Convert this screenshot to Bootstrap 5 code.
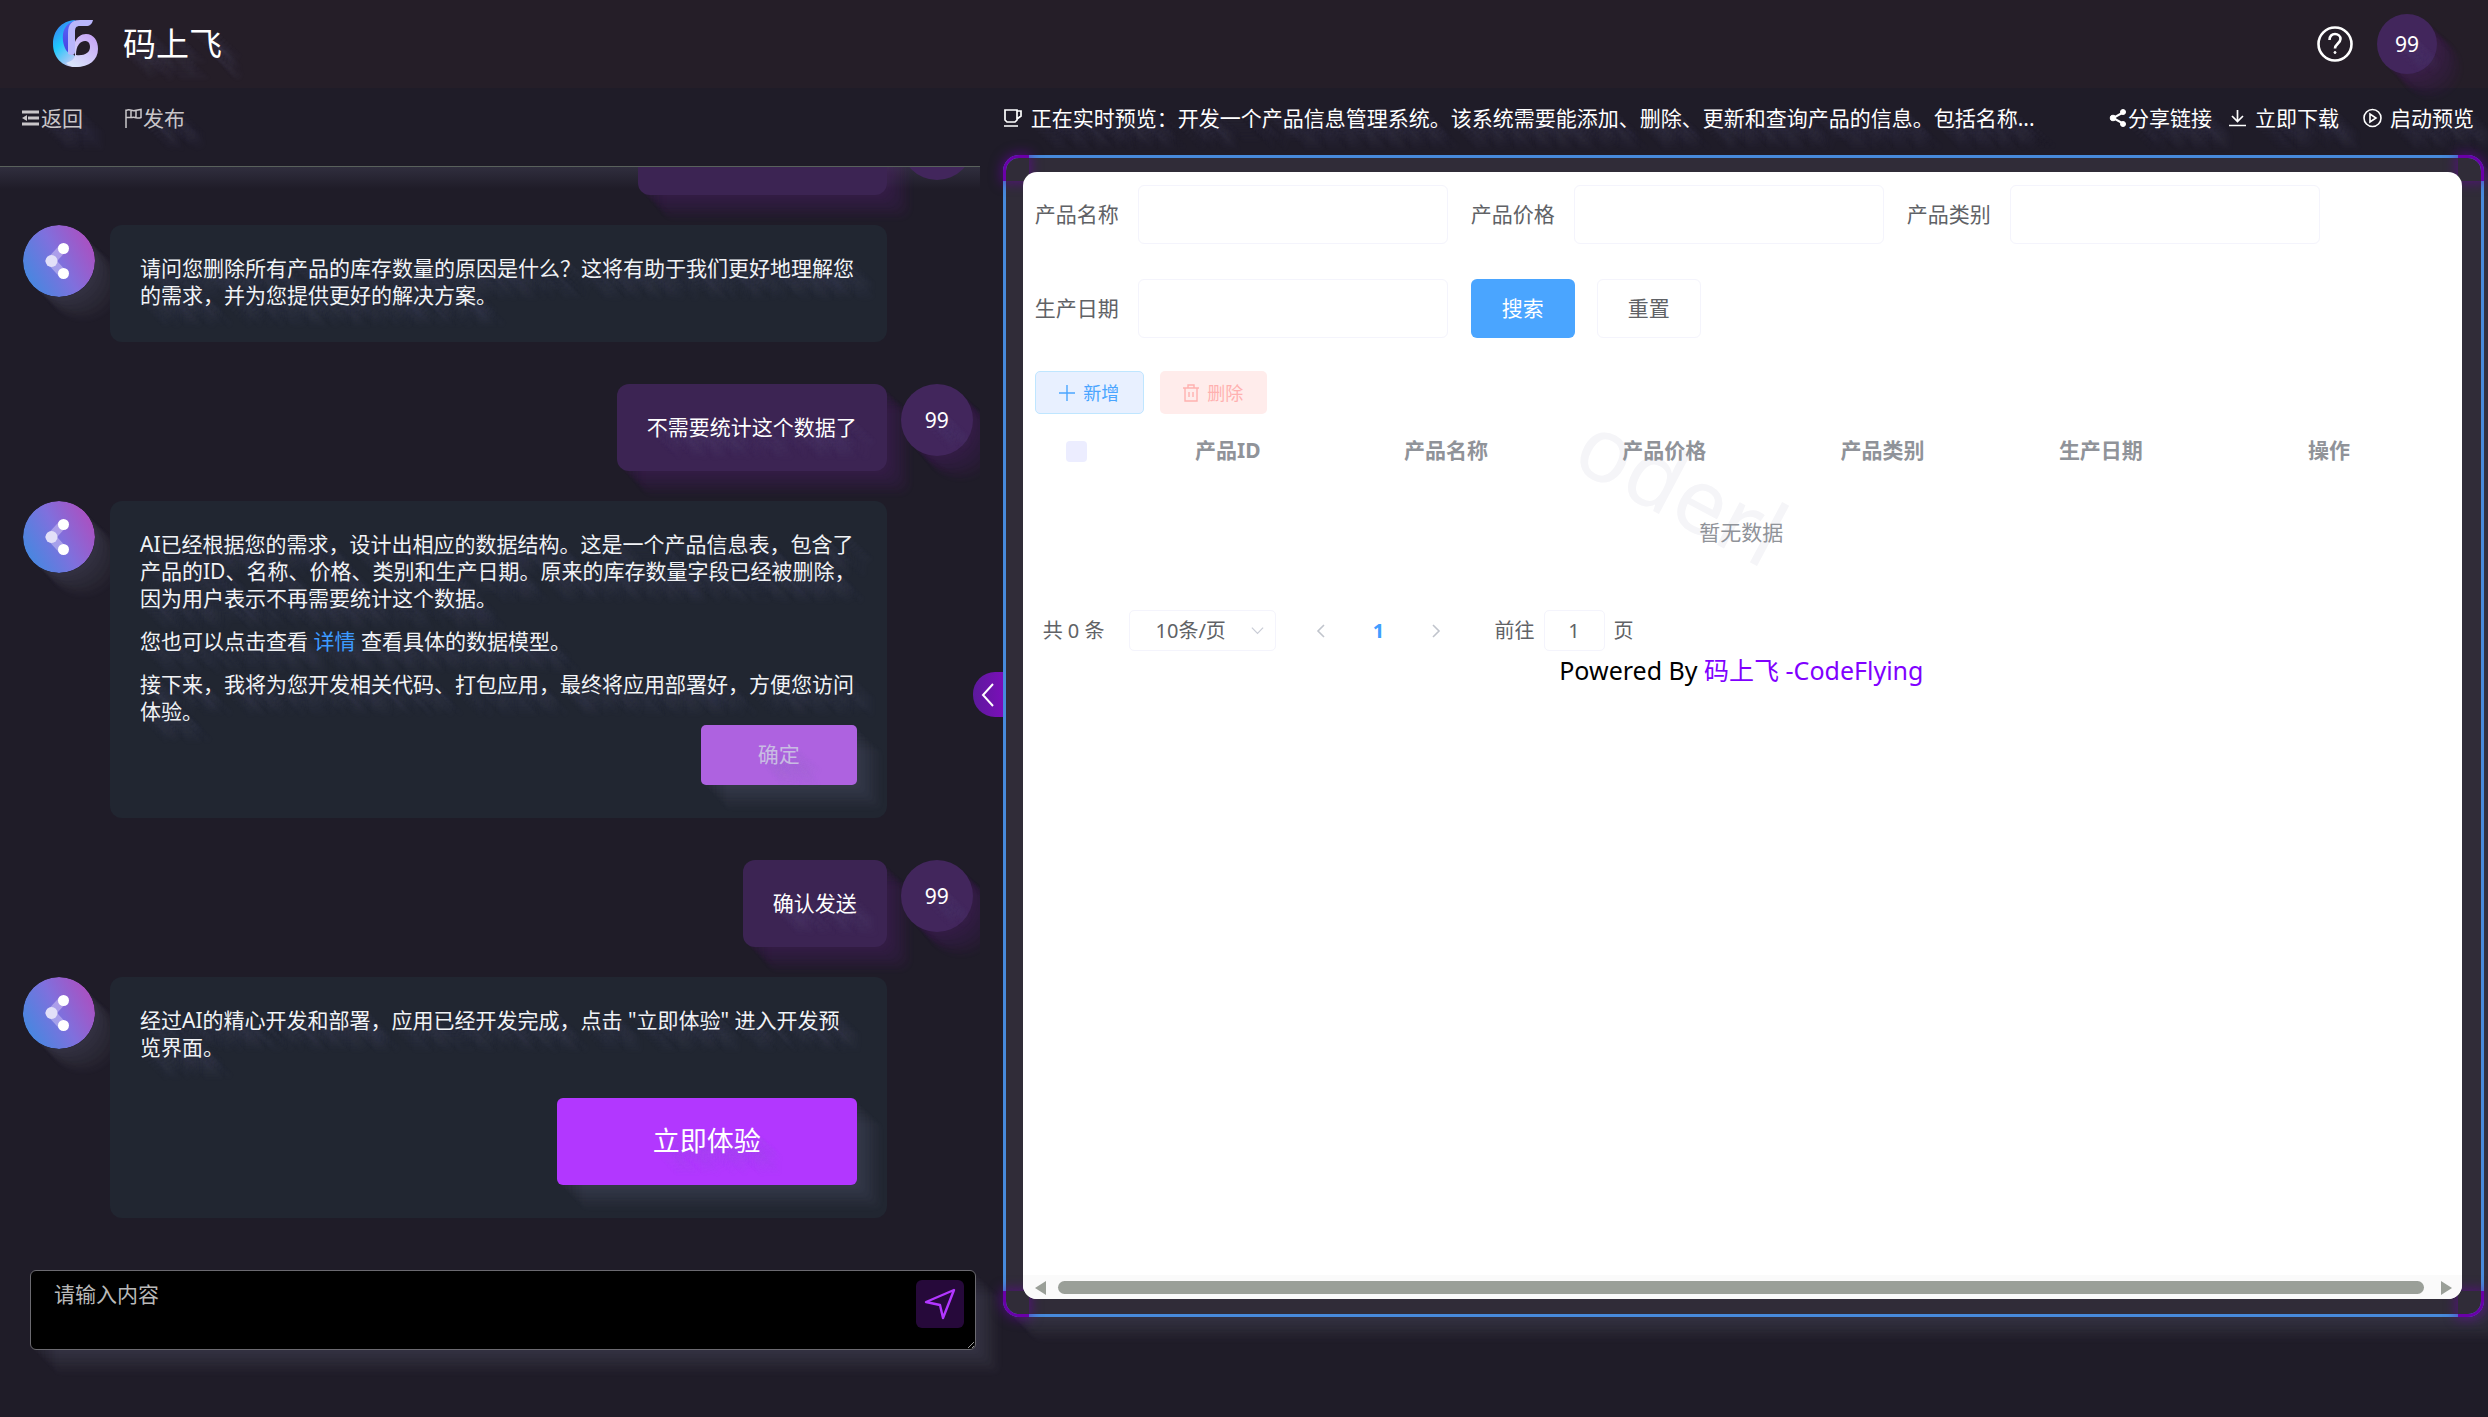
<!DOCTYPE html>
<html lang="zh-CN">
<head>
<meta charset="utf-8">
<meta name="viewport" content="width=device-width, initial-scale=1">
<title>码上飞</title>
<link href="https://cdn.jsdelivr.net/npm/bootstrap@5.3.0/dist/css/bootstrap.min.css" rel="stylesheet">
<style>
:root{
  --trail:rgba(130,135,180,.06);
  --trail-text:3px 3px 2px var(--trail),6px 6px 2px var(--trail),9px 9px 3px var(--trail),12px 12px 3px var(--trail),15px 15px 4px var(--trail),18px 18px 4px var(--trail),21px 21px 4px var(--trail);
  --glow:rgba(150,150,190,.03);
}
body{font-family:"Noto Sans","Noto Sans CJK SC",sans-serif;font-size:21px;line-height:27px;background:#1f1c28;color:#fff}
button,input,select,textarea{font-family:inherit}
.trail{text-shadow:var(--trail-text)}
.trail-box{box-shadow:4px 4px 2px var(--glow),8px 8px 2px var(--glow),12px 12px 3px var(--glow),16px 16px 3px var(--glow),20px 20px 4px var(--glow),24px 24px 4px var(--glow)}
.violet{--glow:rgba(110,40,140,.06)}
.topbar{flex:none;height:88px;background:#251e28;padding:0 51px 0 53px}
.topbar .brand{font-size:33px;line-height:44px}
.user-dot{flex:none;border-radius:50%;background:#42265c;font-size:21px}
.dot-sm{width:60px;height:60px}
.dot-lg{width:72px;height:72px}
.plain{background:none;border:0;padding:0;color:inherit;line-height:27px}
.side{flex:0 0 40.3%;min-width:0}
.side-tools{flex:none;height:60px;padding:0 22px;gap:42px;color:#c9c6c9;margin-bottom:18px}
.chat{border-top:1px solid #59615c;margin-right:23px;padding:0 7px 36px 23px;min-height:0;background:linear-gradient(#302e3e,#1f1c28 22px)}
.bot{gap:15px;margin-bottom:42px}
.bot:last-child{margin-bottom:0}
.mine{gap:14px;margin-bottom:30px}
.bubble{border-radius:12px;padding:30px 30px 33px}
.bot .bubble{flex:1;min-width:0;margin-right:86px;background:#212631;color:#f1f3f6}
.bot .avatar{flex:none;width:72px;height:72px;border-radius:50%}
.mine .bubble{background:#3c2453;padding-bottom:30px;padding-left:30px}
.mine .bubble.past{width:249px;height:87px}
.bubble p{margin-bottom:16px}
.bubble p.last{margin-bottom:0}
.bubble p a{color:#3d9bff;text-decoration:none}
.btn-ok{width:156px;height:60px;border:0;border-radius:5px;background:#ae62e0;color:#cbb6e6;font-size:21px}
.btn-ok:disabled{background:#ae62e0;color:#c8bce2;opacity:1}
.btn-go{width:300px;height:87px;margin-top:37px;border:0;border-radius:6px;background:#b237ff;color:#fff;font-size:27px}
.btn-go:hover{background:#a32bf0;color:#fff}
.btn-ok,.btn-go{--trail:rgba(225,130,255,.14)}
.composer{flex:none;margin:0 27px 67px 30px}
.composer textarea{display:block;height:80px;background:#000;border:1px solid #6b6a70;border-radius:6px;color:#eee;font-size:21px;line-height:27px;padding:10px 70px 10px 23px}
.composer textarea:focus{background:#000;color:#eee}
.composer textarea::placeholder{color:#b9b9b9}
.send{position:absolute;right:12px;top:10px;width:48px;height:48px;border:0;border-radius:6px;background:#26093a}
.stage{min-width:0}
.stage-tools{flex:none;height:60px;margin-bottom:7px;padding-right:14px}
.stage-tools a{color:#fff;text-decoration:none}
.frame{margin:0 4px 100px 0;border:3px solid #478adb;border-radius:16px;padding:14px 19px 15px 17px;background:#302c38;min-height:0;--glow:rgba(150,150,190,.03)}
.corner{position:absolute;width:26px;height:26px;border:0 solid #6a00a8;box-shadow:0 0 12px 2px rgba(106,0,168,.55)}
.c-tl{left:-3px;top:-3px;border-width:3px 0 0 3px;border-top-left-radius:16px}
.c-tr{right:-3px;top:-3px;border-width:3px 3px 0 0;border-top-right-radius:16px}
.c-bl{left:-3px;bottom:-3px;border-width:0 0 3px 3px;border-bottom-left-radius:16px}
.c-br{right:-3px;bottom:-3px;border-width:0 3px 3px 0;border-bottom-right-radius:16px}
.fold{position:absolute;left:-33px;top:514px;width:30px;height:45px;border:0;padding:0;border-radius:22px 0 0 22px;background:linear-gradient(90deg,#5c1a9c,#7a0fb8)}
.panel{position:relative;background:#fff;border-radius:14px;color:#606266}
.panel-body{padding:13px 14px 0 12px;min-height:0}
.filters{row-gap:35px;column-gap:23px}
.field label{width:103px}
.field input{width:310px;height:59px;border:1px solid #f4f4fc;border-radius:6px;font-size:21px}
.btn-act{width:104px;height:59px;border-radius:6px;font-size:21px;line-height:27px}
.btn-find{background:#4aa5ff;color:#fff;border:0}
.btn-reset{background:#fff;border:1px solid #f4f4fc;color:#606266;margin-left:22px}
.actions{margin-top:33px}
.btn-mini{height:43px;border-radius:5px;font-size:18px;line-height:24px;padding:0 23px}
.btn-add{background:#e8f0ff;border:1px solid #bfe6ff;color:#4aa5ff;width:109px}
.btn-del{background:#ffeceb;border:0;color:#ffb1b0;width:107px}
.grid-table{table-layout:fixed;color:#909399;--bs-table-bg:transparent;--bs-table-color:#909399}
.grid-table th{height:72px;padding:0;text-align:center;vertical-align:middle;border:0;font-weight:700}
.grid-table td{height:92px;padding:0;text-align:center;vertical-align:middle;border:0;color:#909399}
.grid-table .form-check-input{width:21px;height:21px;margin:0;border:0;background-color:#ecedff;border-radius:4px;vertical-align:middle}
.ghost{position:absolute;left:562px;top:218px;font-size:90px;line-height:90px;color:#f5f5f8;transform:rotate(28deg);transform-origin:0 50%;white-space:nowrap;pointer-events:none}
.pager{font-size:20px;padding-left:8px;margin-top:32px}
.pager select{width:147px;height:41px;margin-left:24px;border:1px solid #f4f4fc;border-radius:5px;font-size:20px;line-height:26px;color:#606266;padding:0 36px 0 26px;--bs-form-select-bg-img:url("data:image/svg+xml,%3csvg xmlns='http://www.w3.org/2000/svg' viewBox='0 0 16 16'%3e%3cpath fill='none' stroke='%23c9ccd6' stroke-width='1.3' d='m2 5 6 6 6-6'/%3e%3c/svg%3e");background-position:right 10px center;background-size:15px}
.pager button{width:58px;color:#c0c4cc}
.pager .now{color:#409eff;font-weight:700}
.pager label{margin-left:29px}
.pager input{width:61px;height:41px;margin:0 9px;border:1px solid #f4f4fc;border-radius:5px;font-size:20px;padding:0;text-align:center;color:#606266}
.powered{color:#000;font-size:25px;line-height:34px;margin-top:2px}
.powered a{color:#8000ff;text-decoration:none}
.hscroll{height:24px;padding:1px 10px 0 12px;gap:12px;background:#fafafa;border-radius:0 0 14px 14px}
.hscroll i{flex:1;height:13px;margin-right:5px;border-radius:7px;background:#9a9f98}
svg{flex:none;display:block}
</style>
</head>
<body>
<svg width="0" height="0" class="position-absolute" aria-hidden="true">
  <defs>
    <linearGradient id="av" x1="0" y1=".75" x2="1" y2=".2"><stop offset="0" stop-color="#4289e0"/><stop offset=".5" stop-color="#7f70dd"/><stop offset="1" stop-color="#b04cbd"/></linearGradient>
    <symbol id="bot" viewBox="0 0 72 72">
      <circle cx="36" cy="36" r="36" fill="url(#av)"/>
      <path d="M40 23 28 36l12 13" fill="none" stroke="#e2d8fa" stroke-opacity=".45" stroke-width="9"/>
      <circle cx="28.500" cy="36" r="6" fill="#e2e0f8"/><circle cx="40.500" cy="23.500" r="5.500" fill="#fff"/><circle cx="40.500" cy="48.500" r="5.500" fill="#fff"/>
    </symbol>
  </defs>
</svg>
<div class="d-flex flex-column vh-100">
  <header class="topbar d-flex align-items-center">
    <svg width="46" height="48" viewBox="0 0 46 48" aria-hidden="true">
      <defs>
        <linearGradient id="l1" x1="0" y1="0" x2=".7" y2="1"><stop offset="0" stop-color="#3f6cf0"/><stop offset=".45" stop-color="#1fc8fb"/><stop offset="1" stop-color="#f0c8f4"/></linearGradient>
        <linearGradient id="l2" x1="1" y1="0" x2=".3" y2="1"><stop offset="0" stop-color="#c49cf5"/><stop offset="1" stop-color="#d9e4fb"/></linearGradient>
        <linearGradient id="l3" x1="0" y1="0" x2="0" y2="1"><stop offset="0" stop-color="#5a66fa"/><stop offset="1" stop-color="#4440e0"/></linearGradient>
      </defs>
      <path d="M22 0C8 1 0 11 0 24c0 13 9 23 22 23 5 0 9-2 12-4L19 34V8z" fill="url(#l1)"/>
      <path d="M21 1c-9 3-12 10-11 20 1 7 4 12 9 14V10c0-4 2-8 6-10z" fill="url(#l3)"/>
      <path d="M22 36V22c2-5 6-8 11-8 8 0 12 7 12 15 0 11-9 18-22 18-5 0-8-2-10-4 6-2 8-4 9-7zm10-15c-5 0-9 5-9 14 8 1 14-2 14-8 0-4-2-6-5-6z" fill="url(#l2)" fill-rule="evenodd"/>
      <path d="M15 34V13C15 4 19 0 27 0h13c-1 4-3 6-7 6h-6c-4 0-5 2-5 6v20c0 3-3 4-7 2z" fill="#b9b6fb"/>
    </svg>
    <span class="brand trail ms-4">码上飞</span>
    <button class="plain ms-auto me-4" type="button" aria-label="帮助">
      <svg width="36" height="36" viewBox="0 0 36 36" fill="none" stroke="#fff"><circle cx="18" cy="18" r="16.500" stroke-width="2.600"/><path d="M12.500 14c0-4 2.500-6 5.500-6s5.500 2 5.500 5c0 4-5.500 5-5.500 9.500" stroke-width="2.600"/><circle cx="18" cy="26.500" r="1" fill="#fff"/></svg>
    </button>
    <span class="user-dot dot-sm d-flex align-items-center justify-content-center trail trail-box violet">99</span>
  </header>

  <main class="d-flex flex-fill" style="min-height:0">
    <section class="side d-flex flex-column">
      <nav class="side-tools d-flex align-items-center">
        <button class="plain trail d-flex align-items-center" type="button">
          <svg width="19" height="18" viewBox="0 0 19 18" stroke="currentColor" stroke-width="3" fill="none"><path d="M0 3h17M6 9h11M0 15h17"/><path d="M0 9 5 6v6z" fill="currentColor" stroke="none"/></svg>返回</button>
        <button class="plain trail d-flex align-items-center" type="button">
          <svg width="18" height="20" viewBox="0 0 18 20" stroke="currentColor" stroke-width="1.500" fill="none"><path d="M1 20V1.500M1 2.500c4-2 6 1 9 0l6-1v8c-4 2-5-1-9 0H1M6 2v7M11 3v7"/></svg>发布</button>
      </nav>

      <div class="chat flex-fill d-flex flex-column justify-content-end overflow-hidden">
        <div class="mine d-flex align-items-start justify-content-end">
          <div class="bubble past trail-box violet"></div>
          <span class="user-dot dot-lg"></span>
        </div>
        <div class="bot d-flex align-items-start">
          <svg class="avatar trail-box" aria-hidden="true"><use href="#bot"/></svg>
          <div class="bubble trail"><p class="last">请问您删除所有产品的库存数量的原因是什么？这将有助于我们更好地理解您的需求，并为您提供更好的解决方案。</p></div>
        </div>
        <div class="mine d-flex align-items-start justify-content-end">
          <div class="bubble trail trail-box violet">不需要统计这个数据了</div>
          <span class="user-dot dot-lg d-flex align-items-center justify-content-center trail trail-box violet">99</span>
        </div>
        <div class="bot d-flex align-items-start">
          <svg class="avatar trail-box" aria-hidden="true"><use href="#bot"/></svg>
          <div class="bubble trail">
            <p>AI已经根据您的需求，设计出相应的数据结构。这是一个产品信息表，包含了产品的ID、名称、价格、类别和生产日期。原来的库存数量字段已经被删除，因为用户表示不再需要统计这个数据。</p>
            <p>您也可以点击查看 <a href="#">详情</a> 查看具体的数据模型。</p>
            <p class="last">接下来，我将为您开发相关代码、打包应用，最终将应用部署好，方便您访问体验。</p>
            <div class="d-flex justify-content-end"><button class="btn btn-ok trail trail-box" type="button" disabled>确定</button></div>
          </div>
        </div>
        <div class="mine d-flex align-items-start justify-content-end">
          <div class="bubble trail trail-box violet">确认发送</div>
          <span class="user-dot dot-lg d-flex align-items-center justify-content-center trail trail-box violet">99</span>
        </div>
        <div class="bot d-flex align-items-start">
          <svg class="avatar trail-box" aria-hidden="true"><use href="#bot"/></svg>
          <div class="bubble trail">
            <p class="last">经过AI的精心开发和部署，应用已经开发完成，点击 "立即体验" 进入开发预览界面。</p>
            <div class="d-flex justify-content-end"><button class="btn btn-go trail trail-box" type="button">立即体验</button></div>
          </div>
        </div>
      </div>

      <form class="composer position-relative mt-3">
        <textarea class="form-control trail-box" placeholder="请输入内容" aria-label="请输入内容"></textarea>
        <button class="send d-flex align-items-center justify-content-center" type="button" aria-label="发送">
          <svg width="32" height="32" viewBox="0 0 32 32" fill="none" stroke="#b237ff" stroke-width="2.400" stroke-linejoin="round"><path d="M30 2 2 14l14 3 3 13z"/></svg>
        </button>
      </form>
    </section>

    <section class="stage flex-fill d-flex flex-column">
      <div class="stage-tools d-flex align-items-center trail">
        <svg class="me-2" width="20" height="20" viewBox="0 0 20 20" fill="none" stroke="#fff" stroke-width="1.700"><path d="M2 2h12v10l-2 2H4l-2-2zM14 3h4v5l-4 3M1 18h14"/></svg>
        <span>正在实时预览：开发一个产品信息管理系统。该系统需要能添加、删除、更新和查询产品的信息。包括名称...</span>
        <nav class="ms-auto d-flex align-items-center flex-shrink-0">
          <a href="#" class="d-flex align-items-center"><svg width="19" height="20" viewBox="0 0 19 20" fill="#fff" stroke="#fff"><path d="M15 4 4 10l11 6" fill="none" stroke-width="2"/><circle cx="14" cy="4" r="2.500"/><circle cx="4" cy="10" r="2.800"/><circle cx="14" cy="16" r="2.500"/></svg>分享链接</a>
          <a href="#" class="d-flex align-items-center ms-3"><svg class="me-2" width="19" height="20" viewBox="0 0 19 20" fill="none" stroke="#fff" stroke-width="1.700"><path d="M9.500 2v11M4 8l5.500 5.500L15 8M1 17.500h17"/></svg>立即下载</a>
          <a href="#" class="d-flex align-items-center ms-4"><svg class="me-2" width="19" height="20" viewBox="0 0 19 20" fill="none" stroke="#fff" stroke-width="1.600"><circle cx="9.500" cy="10" r="8.500"/><path d="M7 6v8l6-4z"/></svg>启动预览</a>
        </nav>
      </div>

      <div class="frame trail-box position-relative flex-fill d-flex">
        <span class="corner c-tl"></span><span class="corner c-tr"></span><span class="corner c-bl"></span><span class="corner c-br"></span>
        <button class="fold d-flex align-items-center justify-content-center" type="button" aria-label="收起"><svg width="14" height="24" viewBox="0 0 14 24" fill="none" stroke="#fff" stroke-width="2"><path d="M12 1 2 12l10 11"/></svg></button>
        <div class="panel flex-fill d-flex flex-column">
          <div class="panel-body flex-fill overflow-hidden">
            <form class="filters d-flex flex-wrap">
              <div class="field d-flex align-items-center"><label for="f1">产品名称</label><input id="f1" class="form-control" type="text"></div>
              <div class="field d-flex align-items-center"><label for="f2">产品价格</label><input id="f2" class="form-control" type="text"></div>
              <div class="field d-flex align-items-center"><label for="f3">产品类别</label><input id="f3" class="form-control" type="text"></div>
              <div class="field d-flex align-items-center"><label for="f4">生产日期</label><input id="f4" class="form-control" type="text"></div>
              <div class="d-flex align-items-center"><button class="btn btn-act btn-find" type="button">搜索</button><button class="btn btn-act btn-reset" type="button">重置</button></div>
            </form>
            <div class="actions d-flex gap-3">
              <button class="btn btn-mini btn-add d-flex align-items-center justify-content-center gap-2" type="button"><svg width="16" height="16" viewBox="0 0 16 16" fill="none" stroke="currentColor" stroke-width="1.400"><path d="M8 0v16M0 8h16"/></svg>新增</button>
              <button class="btn btn-mini btn-del d-flex align-items-center justify-content-center gap-2" type="button"><svg width="16" height="18" viewBox="0 0 16 18" fill="none" stroke="currentColor" stroke-width="1.400"><path d="M0 4h16M5 4V1h6v3M2 4v13h12V4M6 8v5M10 8v5"/></svg>删除</button>
            </div>
            <div class="ghost" aria-hidden="true">oderl</div>
            <table class="table grid-table mb-0 position-relative">
              <colgroup><col style="width:84px"><col><col><col><col><col><col style="width:238px"></colgroup>
              <thead><tr><th><input class="form-check-input" type="checkbox" aria-label="全选"></th><th>产品ID</th><th>产品名称</th><th>产品价格</th><th>产品类别</th><th>生产日期</th><th>操作</th></tr></thead>
              <tbody><tr><td colspan="7">暂无数据</td></tr></tbody>
            </table>
            <div class="pager d-flex align-items-center">
              <span>共 0 条</span>
              <select class="form-select" aria-label="每页条数"><option>10条/页</option></select>
              <div class="d-flex ms-3">
                <button class="plain d-flex justify-content-center align-items-center" type="button" aria-label="上一页"><svg width="9" height="14" viewBox="0 0 9 14" fill="none" stroke="currentColor" stroke-width="1.600"><path d="M8 1 2 7l6 6"/></svg></button>
                <button class="plain now" type="button">1</button>
                <button class="plain d-flex justify-content-center align-items-center" type="button" aria-label="下一页"><svg width="9" height="14" viewBox="0 0 9 14" fill="none" stroke="currentColor" stroke-width="1.600"><path d="m1 1 6 6-6 6"/></svg></button>
              </div>
              <label for="pg">前往</label><input id="pg" class="form-control" type="text" value="1"><span>页</span>
            </div>
            <div class="powered text-center">Powered By <a href="#">码上飞 -CodeFlying</a></div>
          </div>
          <div class="hscroll d-flex align-items-center" aria-hidden="true">
            <svg width="11" height="14" viewBox="0 0 11 14" fill="#9a9f98"><path d="M11 0v14L0 7z"/></svg><i></i><svg width="11" height="14" viewBox="0 0 11 14" fill="#9a9f98"><path d="M0 0v14l11-7z"/></svg>
          </div>
        </div>
      </div>
    </section>
  </main>
</div>
<script src="https://cdn.jsdelivr.net/npm/bootstrap@5.3.0/dist/js/bootstrap.bundle.min.js"></script>
</body>
</html>
